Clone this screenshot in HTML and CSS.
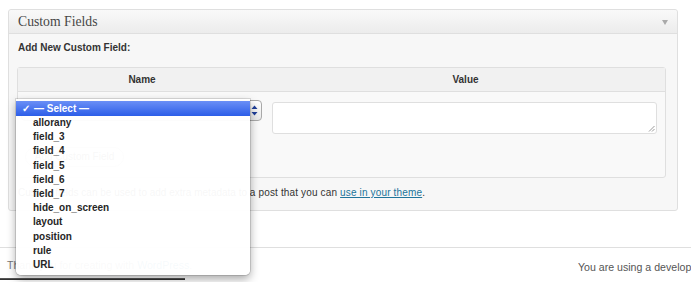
FILE: index.html
```html
<!DOCTYPE html>
<html>
<head>
<meta charset="utf-8">
<link rel="stylesheet" href="styles.css">
</head>
<body>
<div class="page">
  <div class="postbox">
    <div class="hndle">
      <span class="title">Custom Fields</span>
      <span class="toggle"></span>
    </div>
    <div class="inside">
      <p class="add-new">Add New Custom Field:</p>
      <div class="meta-table">
        <div class="thead">
          <div class="col-name">Name</div>
          <div class="col-value">Value</div>
        </div>
        <div class="tbody">
          <div class="row">
            <div class="col-name">
              <div class="select">
                <svg class="updown" width="7" height="11" viewBox="0 0 7 11"><path d="M3.5 0.5 L6.5 4 L0.5 4 Z M3.5 10.5 L6.5 7 L0.5 7 Z" fill="#1f3f9a"/></svg>
              </div>
            </div>
            <div class="col-value">
              <div class="textarea">
                <svg class="grip" width="7" height="7" viewBox="0 0 7 7"><path d="M6.5 1 L1 6.5 M6.5 4 L4 6.5" stroke="#999" stroke-width="1"/></svg>
              </div>
            </div>
          </div>
          <div class="btnrow"><span class="button">Add Custom Field</span></div>
        </div>
      </div>
      <p class="desc">Custom fields can be used to add extra metadata to <span class="tail">a post that you can <a href="#">use in your theme</a>.</span></p>
    </div>
  </div>
  <div class="footer">
    <span class="footer-left">Thank you for creating with <a href="#">WordPress</a>.</span>
    <span class="footer-right">You are using a development version (3.5-beta2). Cool! Please stay updated.</span>
  </div>
  <div class="dockbar"></div>

  <div class="menu">
    <div class="item selected"><span class="check">✓</span>— Select —</div>
    <div class="item">allorany</div>
    <div class="item">field_3</div>
    <div class="item">field_4</div>
    <div class="item">field_5</div>
    <div class="item">field_6</div>
    <div class="item">field_7</div>
    <div class="item">hide_on_screen</div>
    <div class="item">layout</div>
    <div class="item">position</div>
    <div class="item">rule</div>
    <div class="item">URL</div>
  </div>
</div>
</body>
</html>
```

FILE: styles.css
```css
html, body {
  margin: 0;
  padding: 0;
  background: #fff;
}
.page {
  position: relative;
  width: 691px;
  height: 282px;
  overflow: hidden;
  font-family: "Liberation Sans", Arial, sans-serif;
  font-size: 10px;
  color: #333;
}
.postbox {
  margin: 9px 13px 0 8px;
  border: 1px solid #dfdfdf;
  border-radius: 3px;
  background: #f7f7f7;
}
.hndle {
  height: 23px;
  border-bottom: 1px solid #dfdfdf;
  background: linear-gradient(#f9f9f9, #ececec);
  border-radius: 3px 3px 0 0;
  display: flex;
  align-items: center;
  justify-content: space-between;
  padding: 0 9px 0 9px;
}
.title {
  font-family: "Liberation Serif", "Times New Roman", serif;
  font-size: 13.7px;
  color: #464646;
  line-height: 16px;
}
.toggle {
  width: 0;
  height: 0;
  border-left: 3px solid transparent;
  border-right: 3px solid transparent;
  border-top: 5px solid #aaa;
  margin-top: 2px;
}
.inside {
  padding: 0 11px 0 8px;
}
.add-new {
  margin: 8px 0 13px 1px;
  font-weight: bold;
  line-height: 12px;
  color: #333;
}
.meta-table {
  border: 1px solid #dfdfdf;
  border-radius: 3px;
  background: #f9f9f9;
}
.thead {
  display: flex;
  height: 23px;
  border-bottom: 1px solid #dfdfdf;
  background: #f1f1f1;
  font-weight: bold;
  line-height: 23px;
  color: #333;
}
.thead .col-name {
  width: 248px;
  text-align: center;
}
.thead .col-value {
  flex: 1;
  text-align: center;
}
.row {
  display: flex;
  align-items: flex-start;
  padding-top: 8px;
}
.row .col-name {
  width: 248px;
  padding-left: 3px;
  box-sizing: border-box;
}
.row .col-value {
  flex: 1;
  padding: 2px 8px 0 6px;
}
.select {
  width: 241px;
  height: 21px;
  box-sizing: border-box;
  border: 1px solid #a9a9a9;
  border-radius: 4px;
  background: linear-gradient(#ffffff, #e8e8e8);
  display: flex;
  align-items: center;
  justify-content: flex-end;
  padding-right: 3px;
}
.updown {
  display: block;
}
.textarea {
  height: 32px;
  box-sizing: border-box;
  border: 1px solid #dfdfdf;
  border-radius: 3px;
  background: #fff;
  display: flex;
  align-items: flex-end;
  justify-content: flex-end;
  padding: 0 1px 1px 0;
}
.grip {
  display: block;
}
.btnrow {
  padding: 13px 0 10px 7px;
  display: flex;
}
.button {
  display: block;
  width: 99px;
  height: 20px;
  box-sizing: border-box;
  border: 1px solid #bbb;
  border-radius: 10px;
  background: linear-gradient(#fefefe, #f0f0f0);
  text-align: center;
  line-height: 18px;
  color: #464646;
}
.desc {
  margin: 9px 0 0 1px;
  padding-bottom: 11px;
  line-height: 12px;
  font-size: 10px;
  color: #333;
}
.desc .tail {
  letter-spacing: 0.15px;
}
.desc a {
  color: #21759b;
  text-decoration: underline;
}
.footer {
  margin-top: 36px;
  border-top: 1px solid #dfdfdf;
  height: 30px;
  display: flex;
  align-items: flex-start;
  color: #555;
  line-height: 12px;
  font-size: 10.6px;
}
.footer-left {
  flex: 0 0 578px;
  padding: 11px 0 0 7px;
  box-sizing: border-box;
  color: #777;
}
.footer-left a {
  color: #21759b;
  text-decoration: none;
}
.footer-right {
  flex: none;
  white-space: nowrap;
  padding-top: 13px;
}
.dockbar {
  width: 185px;
  height: 2px;
  background: linear-gradient(#666, #222);
}
.menu {
  position: absolute;
  left: 16px;
  top: 99px;
  width: 234px;
  height: 176px;
  box-sizing: border-box;
  padding-top: 2px;
  background: rgba(255, 255, 255, 0.96);
  border-radius: 0 0 5px 5px;
  box-shadow: 0 0 0 1px rgba(0, 0, 0, 0.12), 0 4px 10px rgba(0, 0, 0, 0.35);
  font-family: "Liberation Sans", Arial, sans-serif;
  font-weight: bold;
  font-size: 10px;
  color: #262626;
}
.item {
  height: 14.2px;
  line-height: 14.2px;
  padding-left: 17px;
  white-space: nowrap;
}
.item.selected {
  height: 15px;
  line-height: 15px;
  padding-left: 6px;
  background: linear-gradient(#6a8ff6, #2d5ee8);
  color: #fff;
}
.check {
  display: inline-block;
  width: 12px;
}
```
